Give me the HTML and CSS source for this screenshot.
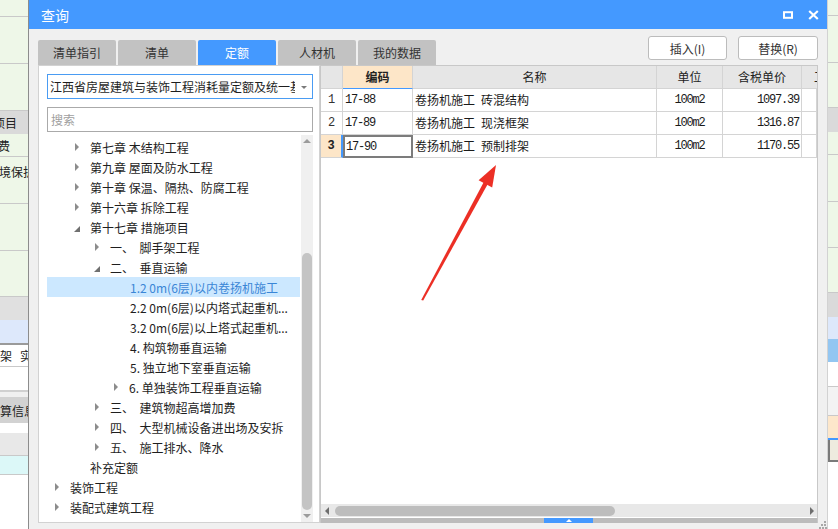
FILE: index.html
```html
<!DOCTYPE html>
<html lang="zh-CN">
<head>
<meta charset="utf-8">
<title>查询</title>
<link rel="stylesheet" href="styles.css">
</head>
<body>
<div class="app">
  <div class="strip left">
    <div class="sr g bb h17"></div>
    <div class="sr g bb h47"></div>
    <div class="sr g bb h47"></div>
    <div class="sr gy h23"><span class="cut7">项目</span></div>
    <div class="sr g bb h23"><span class="cut2">费</span></div>
    <div class="sr g bb h47 top"><span class="cut1">境保护</span></div>
    <div class="sr g bb h47"></div>
    <div class="sr g bb h46"></div>
    <div class="sr gy2 h23"></div>
    <div class="sr lb h23"></div>
    <div class="sr dk h2"></div>
    <div class="sr w bb h22"><span>架&nbsp;&nbsp;&nbsp;实</span></div>
    <div class="sr w h23"></div>
    <div class="sr ln h2"></div>
    <div class="sr f0 h5"></div>
    <div class="sr gy3 h26"><span>算信息</span></div>
    <div class="sr w h10"></div>
    <div class="sr lg bb h23"></div>
    <div class="sr cy bb h19"></div>
    <div class="sr w fill"></div>
  </div>

  <div class="dialog">
    <div class="titlebar">
      <span class="title">查询</span>
      <div class="winbtns">
        <svg class="ico-max" width="10" height="8" viewBox="0 0 10 8"><rect x="1" y="1.2" width="8" height="5.6" fill="none" stroke="#fff" stroke-width="2"/></svg>
        <svg class="ico-close" width="11" height="10" viewBox="0 0 11 10"><path d="M1.2 1 L9.8 9 M9.8 1 L1.2 9" stroke="#fff" stroke-width="2.2" fill="none"/></svg>
      </div>
    </div>
    <div class="dbody">
      <div class="toolbar">
        <div class="tabs">
          <div class="tab">清单指引</div>
          <div class="tab">清单</div>
          <div class="tab active">定额</div>
          <div class="tab">人材机</div>
          <div class="tab">我的数据</div>
        </div>
        <div class="btns">
          <button class="btn b1">插入(I)</button>
          <button class="btn b2">替换(R)</button>
        </div>
      </div>
      <div class="main">
        <div class="lpanel">
          <div class="combo">
            <span class="combo-text">江西省房屋建筑与装饰工程消耗量定额及统一基价表(2017)</span>
            <span class="caret"></span>
          </div>
          <div class="search">搜索</div>
          <div class="treewrap">
            <div class="tree">
              <div class="node l1"><i class="ar"></i><span>第七章 木结构工程</span></div>
              <div class="node l1"><i class="ar"></i><span>第九章 屋面及防水工程</span></div>
              <div class="node l1"><i class="ar"></i><span>第十章 保温、隔热、防腐工程</span></div>
              <div class="node l1"><i class="ar"></i><span>第十六章 拆除工程</span></div>
              <div class="node l1"><i class="ar open"></i><span>第十七章 措施项目</span></div>
              <div class="node l2"><i class="ar"></i><span>一、&nbsp;&nbsp;脚手架工程</span></div>
              <div class="node l2"><i class="ar open"></i><span>二、&nbsp;&nbsp;垂直运输</span></div>
              <div class="node l3 sel"><i class="ar none"></i><span>1.2 0m(6层)以内卷扬机施工</span></div>
              <div class="node l3"><i class="ar none"></i><span>2.2 0m(6层)以内塔式起重机...</span></div>
              <div class="node l3"><i class="ar none"></i><span>3.2 0m(6层)以上塔式起重机...</span></div>
              <div class="node l3"><i class="ar none"></i><span>4. 构筑物垂直运输</span></div>
              <div class="node l3"><i class="ar none"></i><span>5. 独立地下室垂直运输</span></div>
              <div class="node l2b"><i class="ar"></i><span>6. 单独装饰工程垂直运输</span></div>
              <div class="node l2"><i class="ar"></i><span>三、&nbsp;&nbsp;建筑物超高增加费</span></div>
              <div class="node l2"><i class="ar"></i><span>四、&nbsp;&nbsp;大型机械设备进出场及安拆</span></div>
              <div class="node l2"><i class="ar"></i><span>五、&nbsp;&nbsp;施工排水、降水</span></div>
              <div class="node l1"><i class="ar none"></i><span>补充定额</span></div>
              <div class="node l0"><i class="ar"></i><span>装饰工程</span></div>
              <div class="node l0"><i class="ar"></i><span>装配式建筑工程</span></div>
            </div>
            <div class="vscroll">
              <div class="vbtn"><i class="tri-up"></i></div>
              <div class="vtrack"><div class="vthumb"></div></div>
              <div class="vbtn"><i class="tri-down"></i></div>
            </div>
          </div>
        </div>

        <div class="tpanel">
          <div class="gridarea">
            <div class="grid">
              <div class="hc"></div>
              <div class="hc hcode">编码</div>
              <div class="hc">名称</div>
              <div class="hc">单位</div>
              <div class="hc">含税单价</div>
              <div class="hc xtra">工程量</div>

              <div class="c num">1</div>
              <div class="c code mono">17-88</div>
              <div class="c name">卷扬机施工&ensp;砖混结构</div>
              <div class="c unit mono">100m2</div>
              <div class="c price mono">1097.39</div>
              <div class="c"></div>

              <div class="c num">2</div>
              <div class="c code mono">17-89</div>
              <div class="c name">卷扬机施工&ensp;现浇框架</div>
              <div class="c unit mono">100m2</div>
              <div class="c price mono">1316.87</div>
              <div class="c"></div>

              <div class="c num cur-row">3</div>
              <div class="c code mono cur">17-90</div>
              <div class="c name">卷扬机施工&ensp;预制排架</div>
              <div class="c unit mono">100m2</div>
              <div class="c price mono">1170.55</div>
              <div class="c"></div>
            </div>
          </div>
          <div class="hscroll">
            <i class="tri-left"></i>
            <div class="htrack"><div class="hthumb"></div></div>
            <i class="tri-right"></i>
          </div>
          <div class="splitter"><span class="handle"><i class="tri-up-w"></i></span></div>
        </div>
      </div>
    </div>
  </div>

  <div class="strip right">
    <div class="sr g bb h16"></div>
    <div class="sr g bb h47"></div>
    <div class="sr g bb h45"></div>
    <div class="sr gy h24"></div>
    <div class="sr g bb h23"></div>
    <div class="sr g bb h47"></div>
    <div class="sr g bb h46"></div>
    <div class="sr g bb h45"></div>
    <div class="sr gy h24"></div>
    <div class="sr lb h22"></div>
    <div class="sr bl h23"></div>
    <div class="sr w bb h25"></div>
    <div class="sr f2 bb h29"></div>
    <div class="sr pe h22"></div>
    <div class="sr blu h2"></div>
    <div class="sr be h22"></div>
    <div class="sr w fill"></div>
  </div>

  <svg class="annot" width="838" height="529" viewBox="0 0 838 529">
    <polygon points="421.2,300 423.2,300.6 488.6,182.6 484.6,180.4" fill="#ec2f25"/>
    <polygon points="496,165 478.6,180.2 492.2,187.6" fill="#ec2f25"/>
  </svg>
  <svg class="grip" width="8" height="8" viewBox="0 0 8 8">
    <rect x="5" y="0" width="2" height="2" fill="#a8a8a8"/>
    <rect x="2" y="3" width="2" height="2" fill="#a8a8a8"/>
    <rect x="5" y="3" width="2" height="2" fill="#a8a8a8"/>
    <rect x="0" y="6" width="2" height="2" fill="#a8a8a8"/>
    <rect x="3" y="6" width="2" height="2" fill="#a8a8a8"/>
    <rect x="6" y="6" width="2" height="2" fill="#a8a8a8"/>
  </svg>
</div>
</body>
</html>
```

FILE: styles.css
```css
* { box-sizing: border-box; }
html, body { margin: 0; padding: 0; }
body {
  width: 838px;
  height: 529px;
  overflow: hidden;
  font-family: "Noto Sans CJK SC", "Noto Sans", sans-serif;
  font-size: 12px;
  color: #1e1e1e;
  background: #fff;
}
.app { position: relative; display: flex; width: 838px; height: 529px; }

/* background application strips */
.strip { flex: none; display: flex; flex-direction: column; overflow: hidden; white-space: nowrap; }
.strip.left { width: 28px; }
.strip.right { width: 10px; }
.sr { flex: none; display: flex; align-items: center; overflow: hidden; color: #222; font-size: 12px; }
.sr.top { align-items: flex-start; padding-top: 6px; }
.sr.fill { flex: 1; }
.g { background: #eef7e8; }
.gy { background: #dadada; }
.gy2 { background: #e0e0e0; }
.gy3 { background: #d2d2d2; }
.lb { background: #dde8fb; }
.bl { background: #93c6f1; }
.w { background: #fff; }
.f0 { background: #f0f0f0; }
.f2 { background: #f3f3f3; }
.lg { background: #e8e8e8; }
.cy { background: #dcf8f8; }
.pe { background: #fde7cb; }
.blu { background: #4499ff; }
.be { background: #eeebdf; border-left: 2px solid #7a7a7a; border-bottom: 2px solid #7a7a7a; }
.dk { background: #9a9a9a; }
.ln { background: #d0d0d0; }
.bb { border-bottom: 1px solid #c9c9c9; }
.h2 { height: 2px; } .h5 { height: 5px; } .h10 { height: 10px; }
.h16 { height: 16px; } .h17 { height: 17px; } .h19 { height: 19px; }
.h22 { height: 22px; } .h23 { height: 23px; } .h24 { height: 24px; }
.h25 { height: 25px; } .h26 { height: 26px; } .h29 { height: 29px; }
.h45 { height: 45px; } .h46 { height: 46px; } .h47 { height: 47px; }
.cut7 { margin-left: -7px; }
.cut2 { margin-left: -2px; }
.cut1 { margin-left: -1px; }

/* dialog */
.dialog {
  flex: none;
  width: 800px;
  height: 529px;
  border-left: 1px solid #8c8c8c;
  border-right: 1px solid #d2d2d2;
  background: #f0f0f0;
  display: flex;
  flex-direction: column;
}
.titlebar {
  flex: none;
  height: 29px;
  background: #4499ff;
  color: #fff;
  display: flex;
  align-items: center;
  padding: 0 8px 0 12px;
  font-size: 14px;
}
.title { flex: 1; }
.winbtns { display: flex; align-items: center; gap: 15px; }

.dbody { flex: 1; display: flex; flex-direction: column; padding: 0 9px; }
.toolbar { flex: none; height: 36px; display: flex; justify-content: space-between; }
.tabs { display: flex; gap: 2px; align-self: flex-end; }
.tab {
  width: 78px;
  height: 25px;
  background: #c2c2c2;
  border-radius: 2px 2px 0 0;
  display: flex;
  align-items: center;
  justify-content: center;
  color: #333;
  font-size: 12px;
}
.tab.active { background: #4499ff; color: #fff; }
.btns { display: flex; gap: 11px; padding-top: 7px; }
.btn {
  height: 24px;
  background: #fff;
  border: 1px solid #bcbcbc;
  border-radius: 3px;
  font-family: inherit;
  font-size: 12px;
  color: #333;
  padding: 0;
  display: flex;
  align-items: center;
  justify-content: center;
}
.b1 { width: 79px; }
.b2 { width: 80px; }

.main { flex: none; height: 458px; display: flex; }

/* left panel */
.lpanel {
  width: 282px;
  flex: none;
  background: #fff;
  border: 1px solid #d2d2d2;
  display: flex;
  flex-direction: column;
}
.combo {
  flex: none;
  margin: 8px 6px 0 8px;
  height: 25px;
  border: 1px solid #4a9cf3;
  display: flex;
  align-items: center;
}
.combo-text { flex: 1; overflow: hidden; white-space: nowrap; padding-left: 2px; color: #1e1e1e; }
.caret {
  flex: none;
  width: 0; height: 0;
  margin: 1px 5px 0 6px;
  border-left: 3px solid transparent;
  border-right: 3px solid transparent;
  border-top: 3px solid #7a7a7a;
}
.search {
  flex: none;
  margin: 8px 6px 0 8px;
  height: 25px;
  border: 1px solid #aaa;
  color: #a0a0a0;
  padding-left: 3px;
  display: flex;
  align-items: center;
}
.treewrap { flex: 1; margin-top: 3px; display: flex; min-height: 0; }
.tree { flex: 1; margin-left: 8px; padding-top: 2px; overflow: hidden; }
.node { height: 20px; display: flex; align-items: center; white-space: nowrap; color: #1e1e1e; }
.node.sel { background: #cce8ff; color: #3a86d6; margin-right: 1px; }
.l0 { padding-left: 8px; }
.l1 { padding-left: 28px; }
.l2 { padding-left: 48px; }
.l2b { padding-left: 67px; }
.l3 { padding-left: 68px; }
.ar { flex: none; width: 15px; height: 20px; display: flex; align-items: center; }
.ar::before {
  content: "";
  display: block;
  width: 0; height: 0;
  border-left: 4px solid #8c8c8c;
  border-top: 4px solid transparent;
  border-bottom: 4px solid transparent;
}
.ar.open::before {
  border-top: 0;
  border-left: 6px solid transparent;
  border-bottom: 6px solid #707070;
  margin-top: 3px;
  margin-left: -1px;
}
.ar.none::before { display: none; }

.vscroll { flex: none; width: 12px; margin-right: 6px; background: #f0f0f0; display: flex; flex-direction: column; }
.vbtn { flex: none; height: 12px; display: flex; align-items: center; justify-content: center; }
.tri-up { width: 0; height: 0; border-left: 4px solid transparent; border-right: 4px solid transparent; border-bottom: 4px solid #9c9c9c; }
.tri-down { width: 0; height: 0; border-left: 4px solid transparent; border-right: 4px solid transparent; border-top: 4px solid #9c9c9c; }
.vtrack { flex: 1; display: flex; flex-direction: column; align-items: center; }
.vthumb { width: 10px; height: 257px; margin-top: 106px; background: #c4c4c4; border-radius: 5px; }

/* table panel */
.tpanel {
  width: 498px;
  flex: none;
  background: #fff;
  border: 1px solid #c8c8c8;
  border-bottom: 0;
  display: flex;
  flex-direction: column;
}
.gridarea { flex: 1; overflow: hidden; }
.grid {
  display: grid;
  grid-template-columns: 22px 70px 244px 66px 79px 1fr;
  grid-auto-rows: 23px;
}
.hc, .c {
  border-right: 1px solid #d4d4d4;
  border-bottom: 1px solid #d4d4d4;
  display: flex;
  align-items: center;
  white-space: nowrap;
  overflow: hidden;
  line-height: 14px;
}
.hc { background: #e6e6e6; justify-content: center; font-size: 12px; color: #222; }
.hcode { background: #fde6c8; font-weight: bold; border-bottom: 1px solid #4499ff; }
.xtra { justify-content: flex-start; padding-left: 12px; border-right: 0; }
.c { font-size: 12px; color: #1a1a1a; }
.mono { font-family: "Liberation Mono", "DejaVu Sans Mono", monospace; font-size: 12px; letter-spacing: -1.2px; }
.num { justify-content: center; font-family: "Liberation Mono", monospace; font-size: 12px; color: #333; }
.cur-row { background: #fde6c8; font-weight: bold; border-right: 2px solid #4499ff; color: #222; }
.code { padding-left: 2px; }
.cur { border: 2px solid #7c7c7c; padding-left: 1px; }
.name { padding-left: 2px; }
.unit { justify-content: center; }
.price { justify-content: flex-end; padding-right: 2px; }

.hscroll {
  flex: none;
  height: 13px;
  background: #e8e8e8;
  display: flex;
  align-items: center;
  padding: 0 3px 0 4px;
}
.tri-left { flex: none; width: 0; height: 0; border-top: 4px solid transparent; border-bottom: 4px solid transparent; border-right: 4px solid #6e6e6e; }
.tri-right { flex: none; width: 0; height: 0; border-top: 4px solid transparent; border-bottom: 4px solid transparent; border-left: 4px solid #6e6e6e; }
.htrack { flex: 1; margin: 0 6px; display: flex; align-items: center; }
.hthumb { width: 280px; height: 10px; background: #bdbdbd; border-radius: 5px; }
.splitter { flex: none; height: 5px; margin-top: 1px; background: #bcbcbc; display: flex; }
.handle { width: 49px; height: 5px; margin-left: 223px; background: #4499ff; display: flex; align-items: center; justify-content: center; }
.tri-up-w { width: 0; height: 0; border-left: 3px solid transparent; border-right: 3px solid transparent; border-bottom: 3px solid #fff; }

/* overlays */
.annot { position: absolute; left: 0; top: 0; pointer-events: none; }
.grip { position: absolute; left: 819px; top: 521px; }
```
